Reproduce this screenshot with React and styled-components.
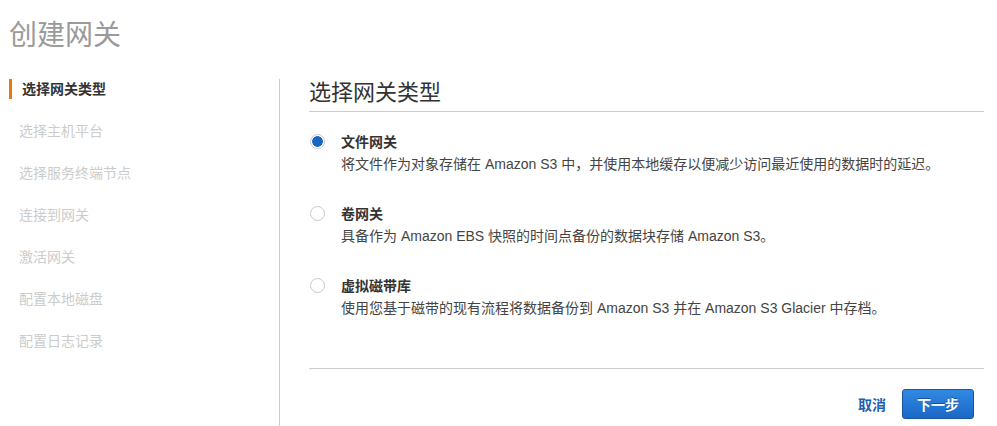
import styled, { createGlobalStyle } from "styled-components";

const GlobalStyle = createGlobalStyle`
  html, body {
    margin: 0;
    padding: 0;
    background: #ffffff;
  }
  body {
    font-family: "Liberation Sans", "Noto Sans CJK SC", sans-serif;
    color: #333333;
  }
`;

const Pagina = styled.div`
  width: 997px;
  height: 426px;
  overflow: hidden;
`;

const Titulo = styled.h1`
  margin: 0;
  padding: 18px 0 0 9px;
  font-size: 28px;
  line-height: 36px;
  font-weight: 400;
  color: #9a9a9a;
`;

const Corpo = styled.div`
  display: flex;
  margin-top: 25px;
  min-height: 360px;
`;

const Lateral = styled.nav`
  width: 279px;
  flex: none;
  border-right: 1px solid #cccccc;
`;

const Passo = styled.div`
  margin-left: 9px;
  margin-bottom: 22px;
  border-left: 3px solid ${({ $ativo }) => ($ativo ? "#e7760e" : "transparent")};
  padding-left: ${({ $ativo }) => ($ativo ? "10px" : "7px")};
  font-size: 14px;
  line-height: 20px;
  font-weight: ${({ $ativo }) => ($ativo ? 700 : 400)};
  color: ${({ $ativo }) => ($ativo ? "#333333" : "#cccccc")};
`;

const Principal = styled.main`
  flex: 1;
  padding: 0 13px 0 29px;
`;

const Cabecalho = styled.h2`
  margin: 0;
  padding-bottom: 4px;
  border-bottom: 1px solid #cccccc;
  font-size: 22px;
  line-height: 28px;
  font-weight: 400;
  color: #333333;
`;

const Opcoes = styled.div`
  display: flex;
  flex-direction: column;
  gap: 28px;
  margin-top: 19px;
`;

const Opcao = styled.label`
  display: flex;
  align-items: flex-start;
  gap: 16px;
  cursor: pointer;
`;

const Radio = styled.span`
  flex: none;
  box-sizing: border-box;
  width: 15px;
  height: 15px;
  margin: 3px 0 0 1px;
  border-radius: 50%;
  border: 1px solid #c8c8c8;
  background: ${({ $marcado }) =>
    $marcado ? "radial-gradient(circle, #1865c4 0 5px, #ffffff 5.6px)" : "#ffffff"};
`;

const Textos = styled.div`
  display: flex;
  flex-direction: column;
`;

const NomeOpcao = styled.div`
  font-size: 14px;
  line-height: 22px;
  font-weight: 700;
  color: #333333;
`;

const Descricao = styled.div`
  font-size: 14px;
  line-height: 22px;
  color: #444444;
`;

const Rodape = styled.div`
  display: flex;
  justify-content: flex-end;
  align-items: center;
  gap: 16px;
  margin-top: 49px;
  padding: 20px 10px 0 0;
  border-top: 1px solid #cccccc;
`;

const BotaoLink = styled.button`
  border: none;
  background: none;
  padding: 0;
  font-family: inherit;
  font-size: 14px;
  font-weight: 700;
  color: #1f5fb2;
  cursor: pointer;
`;

const BotaoPrimario = styled.button`
  box-sizing: border-box;
  width: 72px;
  height: 30px;
  border: 1px solid #18559f;
  border-radius: 3px;
  background: linear-gradient(#3089e3, #1b68c6);
  font-family: inherit;
  font-size: 14px;
  font-weight: 700;
  color: #ffffff;
  text-shadow: 0 -1px 0 rgba(0, 0, 0, 0.35);
  cursor: pointer;
`;

const passos = [
  "选择网关类型",
  "选择主机平台",
  "选择服务终端节点",
  "连接到网关",
  "激活网关",
  "配置本地磁盘",
  "配置日志记录",
];

const opcoes = [
  {
    nome: "文件网关",
    texto: "将文件作为对象存储在 Amazon S3 中，并使用本地缓存以便减少访问最近使用的数据时的延迟。",
  },
  {
    nome: "卷网关",
    texto: "具备作为 Amazon EBS 快照的时间点备份的数据块存储 Amazon S3。",
  },
  {
    nome: "虚拟磁带库",
    texto: "使用您基于磁带的现有流程将数据备份到 Amazon S3 并在 Amazon S3 Glacier 中存档。",
  },
];

export default function App() {
  return (
    <Pagina>
      <GlobalStyle />
      <Titulo>创建网关</Titulo>
      <Corpo>
        <Lateral>
          {passos.map((p, i) => (
            <Passo key={p} $ativo={i === 0}>
              {p}
            </Passo>
          ))}
        </Lateral>
        <Principal>
          <Cabecalho>选择网关类型</Cabecalho>
          <Opcoes>
            {opcoes.map((o, i) => (
              <Opcao key={o.nome}>
                <Radio $marcado={i === 0} />
                <Textos>
                  <NomeOpcao>{o.nome}</NomeOpcao>
                  <Descricao>{o.texto}</Descricao>
                </Textos>
              </Opcao>
            ))}
          </Opcoes>
          <Rodape>
            <BotaoLink>取消</BotaoLink>
            <BotaoPrimario>下一步</BotaoPrimario>
          </Rodape>
        </Principal>
      </Corpo>
    </Pagina>
  );
}
